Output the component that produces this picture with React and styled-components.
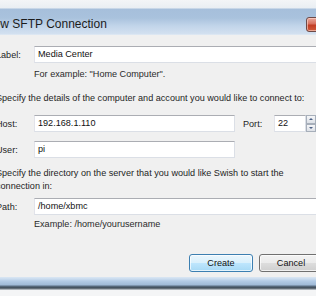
import React from 'react'
import styled, { createGlobalStyle } from 'styled-components'

const Global = createGlobalStyle`
  html, body {
    margin: 0;
    padding: 0;
    background: #f4f5f6;
    overflow: hidden;
  }
  body {
    width: 316px;
    height: 296px;
    font-family: "Liberation Sans", Arial, sans-serif;
  }
`

const Window = styled.div`
  width: 340px;
  margin-left: -10px;
  display: flex;
  flex-direction: column;
`

const TitleBar = styled.div`
  height: 35px;
  display: flex;
  align-items: flex-start;
  background: linear-gradient(
    #f3f5f7 0,
    #e9eef3 8px,
    #a6bfdb 9px,
    #a9c2dd 18px,
    #c2d5ea 26px,
    #d3e1f0 34px,
    #e6edf5 35px
  );
`

const Title = styled.div`
  margin: 17px 0 0 -5px;
  font-size: 12px;
  color: #1c1c1c;
  flex: 1;
  white-space: nowrap;
`

const Close = styled.div`
  width: 24px;
  height: 15px;
  flex: none;
  margin: 17px 0 0 0;
  box-sizing: border-box;
  border: 1px solid #6d4a48;
  border-radius: 3px;
  background: linear-gradient(#e9a99c 0, #d7705e 45%, #c13d24 55%, #d05a3a 100%);
  box-shadow: inset 0 0 0 1px rgba(255, 220, 210, 0.6);
`

const Body = styled.div`
  background: #f0f0f0;
  padding: 11px 0 0 6px;
  height: 231px;
  font-size: 9.1px;
  color: #1e1e1e;
  display: flex;
  flex-direction: column;
`

const Row = styled.div`
  display: flex;
  align-items: center;
  height: 17px;
  margin-top: ${p => p.$top || 0}px;
`

const Label = styled.div`
  width: 38px;
  flex: none;
`

const Input = styled.div`
  box-sizing: border-box;
  height: 17px;
  width: ${p => (p.$w ? `${p.$w}px` : 'auto')};
  flex: ${p => (p.$w ? 'none' : '1')};
  background: #fff;
  border: 1px solid #dbdfe6;
  border-top-color: #abadb3;
  border-left-color: #e2e3ea;
  padding: 0 3px;
  line-height: 15px;
  font-size: 9.1px;
  color: #111;
`

const Hint = styled.div`
  margin: ${p => p.$top || 0}px 0 0 38px;
  line-height: 11px;
  color: #2a2a2a;
`

const Text = styled.div`
  margin-top: ${p => p.$top || 0}px;
  line-height: 13px;
  color: #1e1e1e;
`

const PortLabel = styled.div`
  width: 31px;
  margin-left: 8px;
  flex: none;
`

const Spin = styled.div`
  width: 10px;
  height: 17px;
  flex: none;
  display: flex;
  flex-direction: column;
  margin-right: 24px;
`

const SpinHalf = styled.div`
  flex: 1;
  box-sizing: border-box;
  border: 1px solid #a7afba;
  background: linear-gradient(#f5f6f8, #dde1e7);
  display: flex;
  align-items: center;
  justify-content: center;
`

const Arrow = styled.div`
  width: 0;
  height: 0;
  border-left: 2px solid transparent;
  border-right: 2px solid transparent;
  ${p => (p.$up ? 'border-bottom: 2px solid #4d6185;' : 'border-top: 2px solid #4d6185;')}
`

const Buttons = styled.div`
  display: flex;
  gap: 6px;
  margin: 24px 0 0 193px;
`

const Button = styled.div`
  box-sizing: border-box;
  width: 64px;
  height: 18px;
  flex: none;
  display: flex;
  align-items: center;
  justify-content: center;
  border-radius: 3px;
  border: 1px solid ${p => (p.$primary ? '#3c7fb1' : '#707070')};
  background: ${p =>
    p.$primary
      ? 'linear-gradient(#eaf6fd 0, #d9f0fc 50%, #bee6fd 51%, #a7d9f5 100%)'
      : 'linear-gradient(#f2f2f2 0, #ebebeb 50%, #dddddd 51%, #cfcfcf 100%)'};
  box-shadow: inset 0 0 0 1px rgba(255, 255, 255, 0.7);
  font-size: 9.1px;
  color: #111;
`

const Frame = styled.div`
  height: 13px;
  background: linear-gradient(
    #dbe7f3 0,
    #c9dbee 2px,
    #b3cbe6 4px,
    #9fb9d6 8px,
    #5d7186 9px,
    #3d4954 11px,
    #8c959e 12px,
    #d0d4d8 13px
  );
`

export default function App() {
  return (
    <>
      <Global />
      <Window>
        <TitleBar>
          <Title>New SFTP Connection</Title>
          <Close />
        </TitleBar>
        <Body>
          <Row>
            <Label>Label:</Label>
            <Input>Media Center</Input>
          </Row>
          <Hint $top={6}>For example: "Home Computer".</Hint>
          <Text $top={12}>Specify the details of the computer and account you would like to connect to:</Text>
          <Row $top={10}>
            <Label>Host:</Label>
            <Input $w={201}>192.168.1.110</Input>
            <PortLabel>Port:</PortLabel>
            <Input $w={32}>22</Input>
            <Spin>
              <SpinHalf><Arrow $up /></SpinHalf>
              <SpinHalf><Arrow /></SpinHalf>
            </Spin>
          </Row>
          <Row $top={9}>
            <Label>User:</Label>
            <Input $w={201}>pi</Input>
          </Row>
          <Text $top={9}>Specify the directory on the server that you would like Swish to start the<br />connection in:</Text>
          <Row $top={5}>
            <Label>Path:</Label>
            <Input>/home/xbmc</Input>
          </Row>
          <Hint $top={4}>Example: /home/yourusername</Hint>
          <Buttons>
            <Button $primary>Create</Button>
            <Button>Cancel</Button>
          </Buttons>
        </Body>
        <Frame />
      </Window>
    </>
  )
}
